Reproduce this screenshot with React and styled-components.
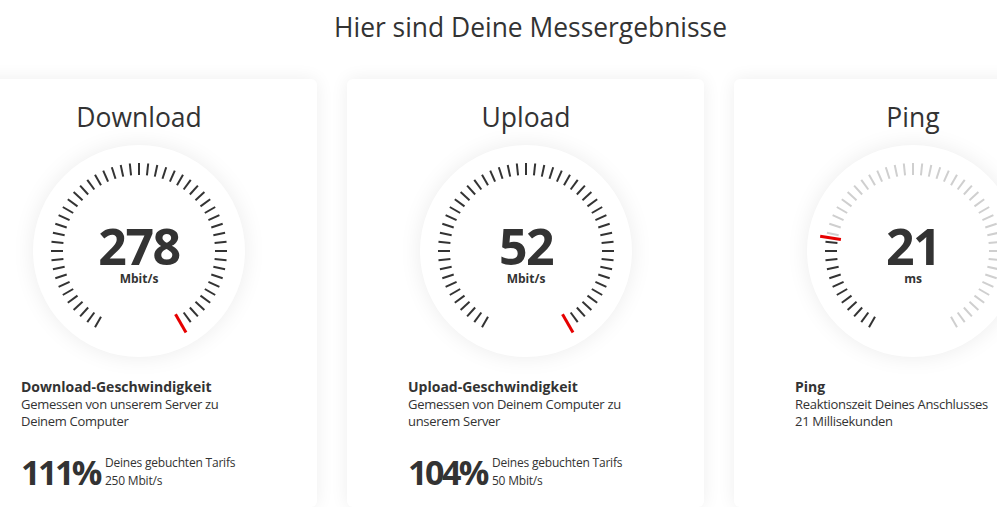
import React from 'react'
import styled, { createGlobalStyle } from 'styled-components'

const Global = createGlobalStyle`
  html, body {
    margin: 0;
    padding: 0;
    background: #fff;
    overflow: hidden;
  }
  body {
    font-family: "Open Sans", "Liberation Sans", sans-serif;
    color: #333;
  }
`

const results = [
  {
    title: 'Download',
    value: '278',
    unit: 'Mbit/s',
    fraction: 1,
    label: 'Download-Geschwindigkeit',
    text: 'Gemessen von unserem Server zu Deinem Computer',
    percent: '111%',
    tarif: '250 Mbit/s',
  },
  {
    title: 'Upload',
    value: '52',
    unit: 'Mbit/s',
    fraction: 1,
    label: 'Upload-Geschwindigkeit',
    text: 'Gemessen von Deinem Computer zu unserem Server',
    percent: '104%',
    tarif: '50 Mbit/s',
  },
  {
    title: 'Ping',
    value: '21',
    unit: 'ms',
    fraction: 0.23,
    label: 'Ping',
    text: 'Reaktionszeit Deines Anschlusses\n21 Millisekunden',
  },
]

const START = 210
const SWEEP = 300
const STEPS = 50

const Gauge = ({ fraction }) => {
  const c = 106
  const redAngle = START + SWEEP * fraction
  const pt = (deg, r) => {
    const a = (deg * Math.PI) / 180
    return [c + Math.sin(a) * r, c - Math.cos(a) * r]
  }
  const ticks = []
  for (let i = 0; i <= STEPS; i++) {
    const deg = START + (SWEEP / STEPS) * i
    if (Math.abs(deg - redAngle) < 2) continue
    const [x1, y1] = pt(deg, 76)
    const [x2, y2] = pt(deg, 88)
    ticks.push(
      <line key={i} x1={x1} y1={y1} x2={x2} y2={y2}
        stroke={deg < redAngle ? '#333' : '#cfcfcf'} strokeWidth="2" />
    )
  }
  const [rx1, ry1] = pt(redAngle, 73)
  const [rx2, ry2] = pt(redAngle, 94)
  return (
    <svg width="212" height="212" viewBox="0 0 212 212">
      {ticks}
      <line x1={rx1} y1={ry1} x2={rx2} y2={ry2} stroke="#e60000" strokeWidth="3" />
    </svg>
  )
}

const App = () => {
  return (
    <>
      <Global />
      <Wrapper>
        <Heading>Hier sind Deine Messergebnisse</Heading>
        <Track>
          {results.map((r) => (
            <Card key={r.title}>
              <CardTitle>{r.title}</CardTitle>
              <Dial>
                <DialTicks>
                  <Gauge fraction={r.fraction} />
                </DialTicks>
                <Value>{r.value}</Value>
                <Unit>{r.unit}</Unit>
              </Dial>
              <Info>
                <Label>{r.label}</Label>
                <Desc>{r.text}</Desc>
                {r.percent && (
                  <Tarif>
                    <Percent>{r.percent}</Percent>
                    <TarifText>
                      Deines gebuchten Tarifs
                      <br />
                      {r.tarif}
                    </TarifText>
                  </Tarif>
                )}
              </Info>
            </Card>
          ))}
        </Track>
      </Wrapper>
    </>
  )
}

const Wrapper = styled.main`
  width: 1141px;
  margin-left: -40px;
  display: flex;
  flex-direction: column;
`

const Heading = styled.h1`
  margin: 9px 0 34px;
  text-align: center;
  font-size: 26.4px;
  line-height: 36px;
  font-weight: 400;
  color: #333;
`

const Track = styled.div`
  display: flex;
  gap: 30px;
`

const Card = styled.section`
  flex: 0 0 357px;
  box-sizing: border-box;
  height: 428px;
  padding: 21px 60px 0 61px;
  background: #fff;
  border-radius: 6px;
  box-shadow: 0 0 18px rgba(0, 0, 0, 0.07);
  display: flex;
  flex-direction: column;
  align-items: center;
`

const CardTitle = styled.h2`
  margin: 0 0 11px;
  font-size: 26.5px;
  line-height: 34px;
  font-weight: 400;
  color: #333;
`

const Dial = styled.div`
  position: relative;
  width: 212px;
  height: 212px;
  border-radius: 50%;
  background: #fff;
  box-shadow: 0 0 22px rgba(0, 0, 0, 0.08);
  display: flex;
  flex-direction: column;
  align-items: center;
  justify-content: center;
  padding-top: 6px;
  box-sizing: border-box;
`

const DialTicks = styled.div`
  position: absolute;
  inset: 0;
`

const Value = styled.div`
  position: relative;
  font-size: 50px;
  line-height: 50px;
  font-weight: 700;
  letter-spacing: -1.5px;
  color: #333;
`

const Unit = styled.div`
  position: relative;
  font-size: 12px;
  line-height: 16px;
  font-weight: 700;
  color: #333;
`

const Info = styled.div`
  align-self: stretch;
  margin-top: 21px;
`

const Label = styled.div`
  font-size: 14px;
  line-height: 18px;
  font-weight: 700;
  color: #333;
`

const Desc = styled.p`
  margin: 0;
  font-size: 13px;
  line-height: 17px;
  letter-spacing: -0.3px;
  white-space: pre-line;
  color: #333;
`

const Tarif = styled.div`
  margin-top: 22px;
  display: flex;
  align-items: center;
  gap: 5px;
`

const Percent = styled.span`
  font-size: 34px;
  line-height: 40px;
  font-weight: 700;
  letter-spacing: -2.5px;
  color: #333;
`

const TarifText = styled.span`
  font-size: 12px;
  line-height: 18px;
  letter-spacing: -0.2px;
  color: #333;
`

export default App
